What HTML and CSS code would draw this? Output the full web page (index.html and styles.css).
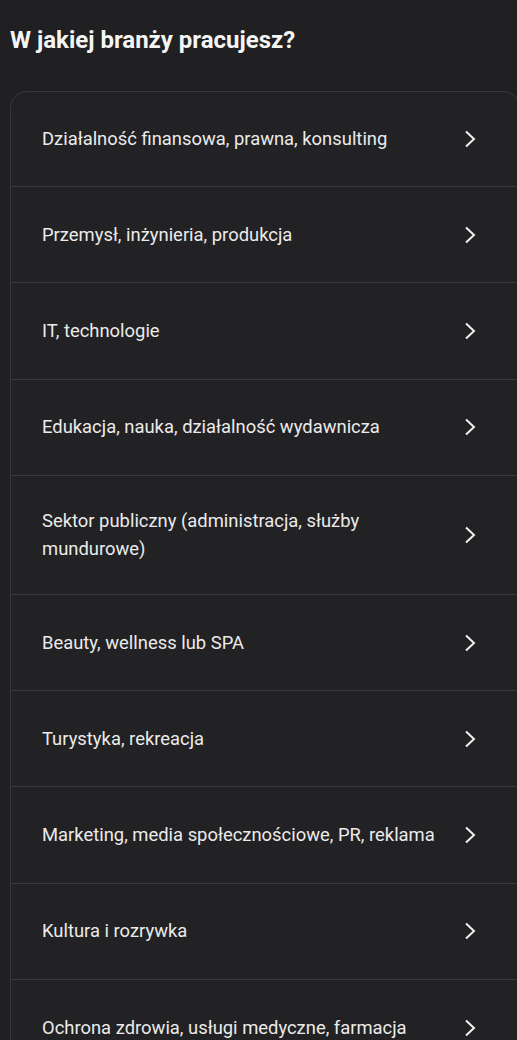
FILE: index.html
```html
<!DOCTYPE html>
<html lang="pl">
<head>
    <meta charset="UTF-8">
    <meta name="viewport" content="width=device-width, initial-scale=1.0">
    <title>W jakiej branży pracujesz?</title>
    <link rel="stylesheet" href="styles.css">
</head>
<body>
    <h1 class="title">W jakiej branży pracujesz?</h1>

    <ul class="card">
        <li class="row"><span>Działalność finansowa, prawna, konsulting</span><svg class="chevron" viewBox="0 0 12 18"><path d="M2 1.5 L10 9 L2 16.5"/></svg></li>
        <li class="row"><span>Przemysł, inżynieria, produkcja</span><svg class="chevron" viewBox="0 0 12 18"><path d="M2 1.5 L10 9 L2 16.5"/></svg></li>
        <li class="row"><span>IT, technologie</span><svg class="chevron" viewBox="0 0 12 18"><path d="M2 1.5 L10 9 L2 16.5"/></svg></li>
        <li class="row"><span>Edukacja, nauka, działalność wydawnicza</span><svg class="chevron" viewBox="0 0 12 18"><path d="M2 1.5 L10 9 L2 16.5"/></svg></li>
        <li class="row"><span>Sektor publiczny (administracja, służby mundurowe)</span><svg class="chevron" viewBox="0 0 12 18"><path d="M2 1.5 L10 9 L2 16.5"/></svg></li>
        <li class="row"><span>Beauty, wellness lub SPA</span><svg class="chevron" viewBox="0 0 12 18"><path d="M2 1.5 L10 9 L2 16.5"/></svg></li>
        <li class="row"><span>Turystyka, rekreacja</span><svg class="chevron" viewBox="0 0 12 18"><path d="M2 1.5 L10 9 L2 16.5"/></svg></li>
        <li class="row"><span>Marketing, media społecznościowe, PR, reklama</span><svg class="chevron" viewBox="0 0 12 18"><path d="M2 1.5 L10 9 L2 16.5"/></svg></li>
        <li class="row"><span>Kultura i rozrywka</span><svg class="chevron" viewBox="0 0 12 18"><path d="M2 1.5 L10 9 L2 16.5"/></svg></li>
        <li class="row"><span>Ochrona zdrowia, usługi medyczne, farmacja</span><svg class="chevron" viewBox="0 0 12 18"><path d="M2 1.5 L10 9 L2 16.5"/></svg></li>
    </ul>
</body>
</html>
```

FILE: styles.css
```css
* {
    box-sizing: border-box;
    margin: 0;
    padding: 0;
}

html, body {
    width: 100%;
    overflow: hidden;
}

body {
    background-color: #201f22;
    font-family: Roboto, "Noto Sans", sans-serif;
    color: #ebebeb;
    padding: 0 0 0 10px;
}

.title {
    font-size: 24px;
    font-weight: bold;
    color: #f5f5f5;
    line-height: 28px;
    padding-top: 26px;
    height: 91px;
}

.card {
    list-style: none;
    width: 510px;
    border: 1px solid #38373b;
    border-radius: 17px;
    background-color: #222124;
    overflow: hidden;
}

.row {
    display: flex;
    align-items: center;
    justify-content: space-between;
    min-height: 96.3px;
    padding: 31px 43px 31px 31px;
    border-bottom: 1px solid #38373b;
    font-size: 18.4px;
    line-height: 28px;
}

.row:first-child {
    min-height: 95px;
}

.row span {
    max-width: 400px;
}

.chevron {
    flex-shrink: 0;
    width: 12px;
    height: 18px;
    margin-left: 16px;
    fill: none;
    stroke: #f0f0f0;
    stroke-width: 2;
}
```
